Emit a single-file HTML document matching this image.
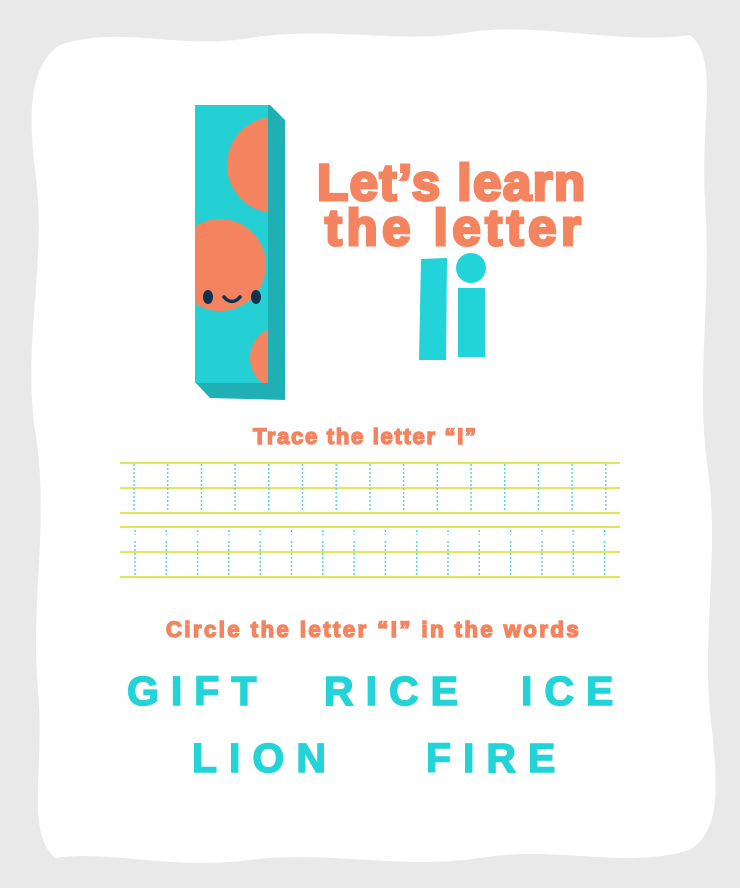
<!DOCTYPE html>
<html><head><style>
body{margin:0;width:740px;height:888px;background:#e9e9e9;overflow:hidden;position:relative;font-family:"Liberation Sans",sans-serif}
svg{position:absolute;left:0;top:0}
.t{position:absolute;color:#f4845f;font-weight:bold;white-space:nowrap;-webkit-text-stroke:1.5px #f4845f}
.w{position:absolute;color:#22d3d8;font-weight:bold;font-size:41px;letter-spacing:12px;white-space:nowrap;-webkit-text-stroke:1.5px #22d3d8}
</style></head><body>
<svg width="740" height="888" viewBox="0 0 740 888">
<path fill="#fff" d="M60 45 C120 25 180 50 250 38 C330 25 400 45 470 32 C540 22 620 45 690 35 C720 60 700 120 705 200 C712 300 695 380 708 470 C720 560 700 640 712 730 C718 790 720 830 690 850 C620 870 560 845 480 858 C400 870 330 850 250 860 C170 870 110 850 55 858 C25 830 45 770 38 690 C30 600 50 520 35 430 C22 340 48 260 35 170 C28 110 30 65 60 45 Z"/>
<polygon points="198,105 270,105 285,120 285,400 210,398 195,382" fill="#1fb0b5"/>
<defs><clipPath id="f"><rect x="195" y="105" width="73" height="278"/></clipPath></defs>
<rect x="195" y="105" width="73" height="278" fill="#25d0d5"/>
<g clip-path="url(#f)" fill="#f4845f">
<circle cx="275" cy="165" r="48"/>
<circle cx="220" cy="265" r="46"/>
<circle cx="282" cy="358" r="32"/>
</g>
<ellipse cx="208" cy="297" rx="5" ry="7" fill="#0e3350"/>
<ellipse cx="256" cy="297" rx="5" ry="7" fill="#0e3350"/>
<path d="M224 297 Q232 306 240 297" stroke="#0e3350" stroke-width="3.5" fill="none" stroke-linecap="round"/>
<polygon points="421,259 447,258 446,360 419,360" fill="#22d3d8"/>
<rect x="458" y="288" width="27" height="69" fill="#22d3d8"/>
<circle cx="471" cy="268" r="15" fill="#22d3d8"/>
<g stroke="#dde85a" stroke-width="2">
<line x1="120" y1="463" x2="620" y2="463"/><line x1="120" y1="488" x2="620" y2="488"/><line x1="120" y1="513" x2="620" y2="513"/>
<line x1="120" y1="527" x2="620" y2="527"/><line x1="120" y1="552" x2="620" y2="552"/><line x1="120" y1="577" x2="620" y2="577"/>
</g>
<g stroke="#5fd3dc" stroke-width="1.5" stroke-dasharray="2 2" id="v1"></g>
</svg>
<script>
var g=document.getElementById('v1'),s='';
for(var i=0;i<15;i++){var x=134+i*33.7;s+='<line x1="'+x+'" y1="464" x2="'+x+'" y2="512"/>';}
for(var i=0;i<16;i++){var x=135+i*31.3;s+='<line x1="'+x+'" y1="530" x2="'+x+'" y2="535"/><line x1="'+x+'" y1="541" x2="'+x+'" y2="576"/>';}
g.innerHTML=s;
</script>
<div class="t" style="left:317px;top:153px;font-size:51px;letter-spacing:1.5px;-webkit-text-stroke:3px #f4845f">Let’s learn</div>
<div class="t" style="left:325px;top:198px;font-size:51px;letter-spacing:4.5px;-webkit-text-stroke:3px #f4845f">the letter</div>
<div class="t" style="left:253px;top:424px;font-size:22px;letter-spacing:1.7px">Trace the letter “I”</div>
<div class="t" style="left:166px;top:617px;font-size:22px;letter-spacing:2.5px">Circle the letter “I” in the words</div>
<div class="w" style="left:127px;top:668px">GIFT</div>
<div class="w" style="left:324px;top:668px">RICE</div>
<div class="w" style="left:521px;top:668px">ICE</div>
<div class="w" style="left:192px;top:735px">LION</div>
<div class="w" style="left:426px;top:735px">FIRE</div>
</body></html>
